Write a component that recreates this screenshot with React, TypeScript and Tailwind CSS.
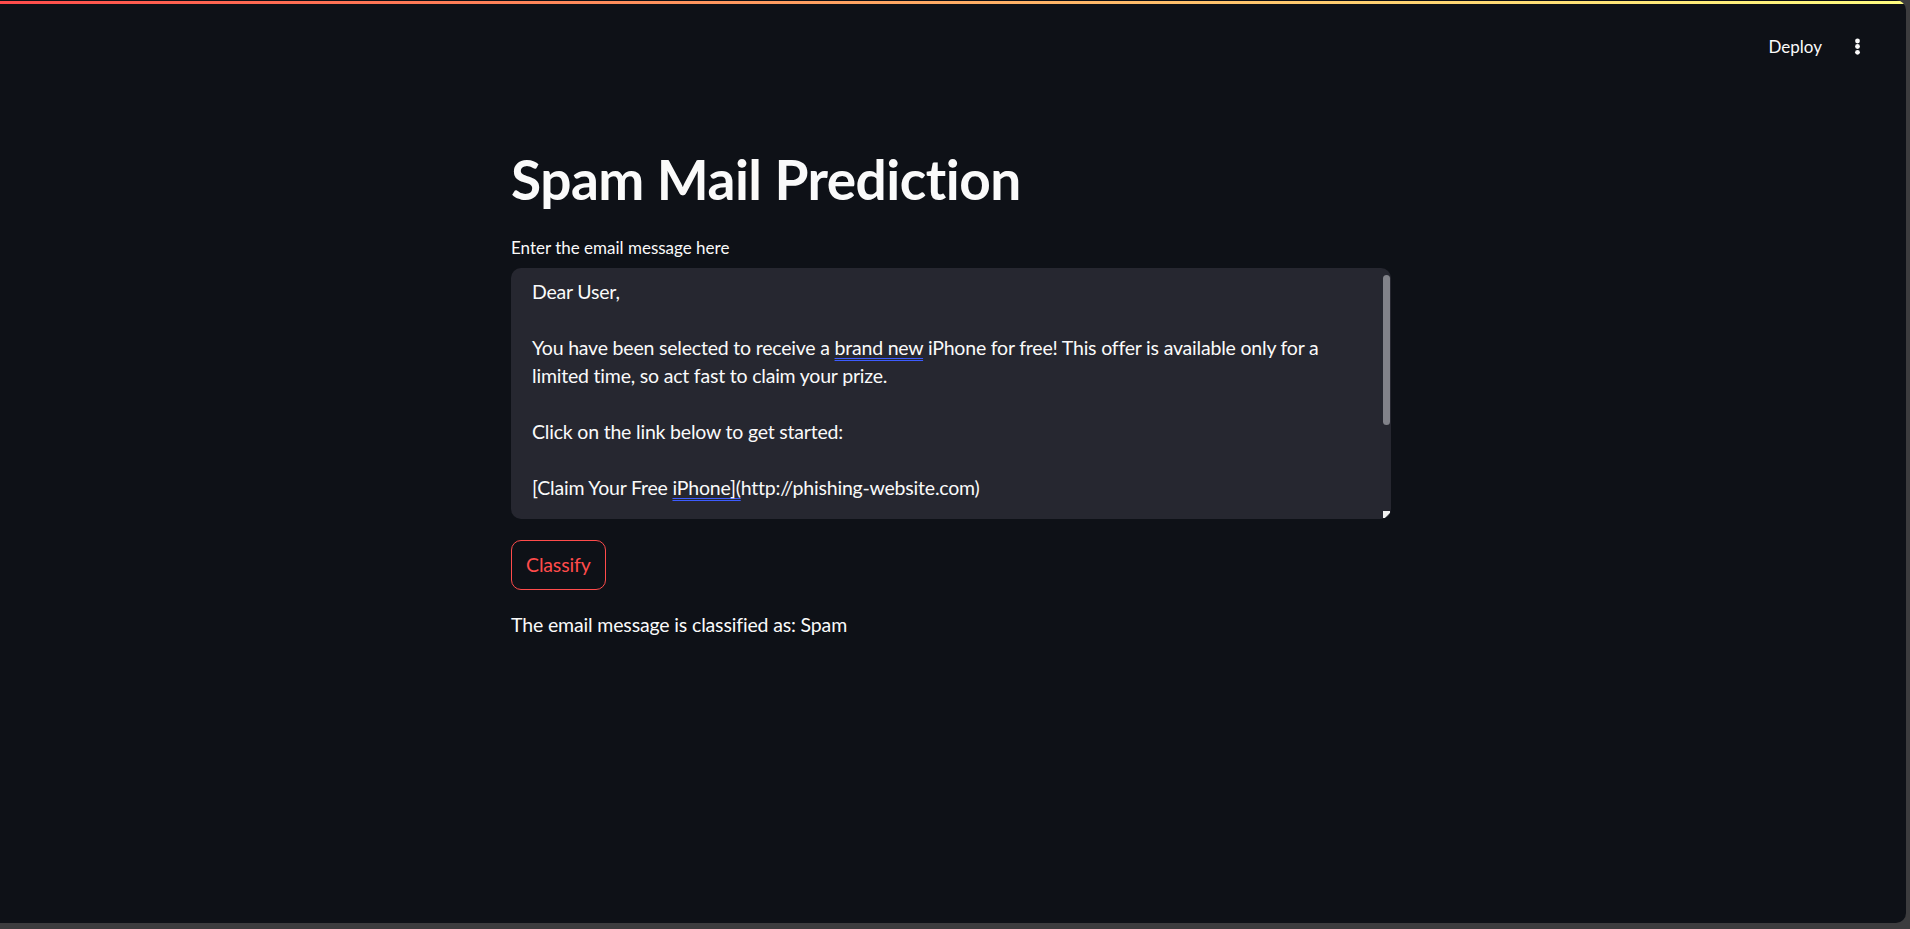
import React from 'react'

const bodyFont = { fontFamily: '"Lato", "Open Sans", sans-serif' }

function Kebab() {
  return (
    <svg width="9" height="18" viewBox="0 0 9 18" className="text-[#fafafa]">
      <circle cx="4.5" cy="3" r="2.4" fill="currentColor" />
      <circle cx="4.5" cy="8.5" r="2.4" fill="currentColor" />
      <circle cx="4.5" cy="14.3" r="2.4" fill="currentColor" />
    </svg>
  )
}

function Resizer() {
  return (
    <svg width="7" height="7" viewBox="0 0 7 7">
      <polygon points="0,0 7,0 7,2 2,7 0,7" fill="#f2f2f2" />
      <polygon points="7,3 7,7 3,7" fill="#6b6b70" />
    </svg>
  )
}

const blueUnderline =
  'underline decoration-double decoration-[#3d5cff] decoration-1 underline-offset-[3px]'

export default function App() {
  return (
    <div className="h-[929px] w-full bg-[#3c3c3e] pr-[4px] pb-[6px]" style={bodyFont}>
      <div className="h-full w-full bg-[#0e1117] rounded-tr-[10px] rounded-br-[10px] overflow-hidden flex flex-col text-[#fafafa]">
        {/* Top decoration */}
        <div className="mt-[1px] h-[3px] w-full bg-linear-to-r from-[#ff4b4b] to-[#fffd80]" />

        {/* Header */}
        <div className="flex items-center justify-end pt-[27px] pr-[44px] h-[59px]">
          <span className="text-[17px] leading-[28px]">Deploy</span>
          <div className="ml-[31px] flex items-center">
            <Kebab />
          </div>
        </div>

        {/* Main */}
        <div className="ml-[511px] w-[880px] pt-[83px]">
          <h1 className="text-[55px] leading-[66px] font-bold tracking-[-0.5px]">
            Spam Mail Prediction
          </h1>

          <label className="block mt-[24px] text-[17px] leading-[24px]">
            Enter the email message here
          </label>

          <div className="relative mt-[8px] h-[251px] rounded-[10px] bg-[#262730] overflow-hidden">
            <div className="pl-[21px] pr-[40px] pt-[10px] text-[19.5px] leading-[28px] tracking-[-0.2px] whitespace-nowrap">
              <div>Dear User,</div>
              <div>&nbsp;</div>
              <div>
                You have been selected to receive a{' '}
                <span className={blueUnderline}>brand new</span> iPhone for free! This offer is available only for a
              </div>
              <div>limited time, so act fast to claim your prize.</div>
              <div>&nbsp;</div>
              <div>Click on the link below to get started:</div>
              <div>&nbsp;</div>
              <div>
                [Claim Your Free <span className={blueUnderline}>iPhone](</span>http://phishing-website.com)
              </div>
              <div>&nbsp;</div>
              <div>Best regards,</div>
              <div>The Rewards Team</div>
            </div>
            <div className="absolute right-[1px] top-[7px] h-[150px] w-[7px] rounded-full bg-[#818289]" />
            <div className="absolute right-[1px] bottom-[1px]">
              <Resizer />
            </div>
          </div>

          <div className="mt-[21px] flex">
            <button className="flex items-center justify-center py-[10px] px-[14px] rounded-[10px] border border-[#ff4b4b] text-[#ff4b4b] text-[19.5px] leading-[28px] tracking-[-0.15px]">
              Classify
            </button>
          </div>

          <p className="mt-[21px] text-[19.5px] leading-[28px] tracking-[-0.15px]">
            The email message is classified as: Spam
          </p>
        </div>
      </div>
    </div>
  )
}
